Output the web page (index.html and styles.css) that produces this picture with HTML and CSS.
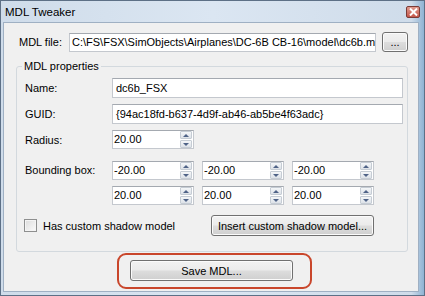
FILE: index.html
```html
<!DOCTYPE html>
<html lang="en">
<head>
    <meta charset="UTF-8">
    <title>MDL Tweaker</title>
    <link rel="stylesheet" href="styles.css">
</head>
<body>
    <div class="window">
        <!-- Title bar -->
        <div class="titlebar">
            <span class="title">MDL Tweaker</span>
            <span class="close">
                <svg width="9" height="8" viewBox="0 0 9 8">
                    <path d="M1 0.5 L8 7.5 M8 0.5 L1 7.5" stroke="#fff" stroke-width="2"/>
                </svg>
            </span>
        </div>

        <div class="client">
            <!-- File chooser -->
            <div class="file-row">
                <span class="file-label">MDL file:</span>
                <div class="text file-input">C:\FS\FSX\SimObjects\Airplanes\DC-6B CB-16\model\dc6b.mdl</div>
                <button class="btn browse">...</button>
            </div>

            <!-- Properties group -->
            <fieldset class="group">
                <legend>MDL properties</legend>

                <div class="row">
                    <span class="row-label">Name:</span>
                    <div class="text wide">dc6b_FSX</div>
                </div>
                <div class="row">
                    <span class="row-label">GUID:</span>
                    <div class="text wide">{94ac18fd-b637-4d9f-ab46-ab5be4f63adc}</div>
                </div>
                <div class="row spin-row">
                    <span class="row-label">Radius:</span>
                    <div class="spin">
                        <span class="spin-val">20.00</span>
                        <span class="spin-btns"><span class="up"></span><span class="down"></span></span>
                    </div>
                </div>

                <div class="bbox">
                    <span class="row-label bbox-label">Bounding box:</span>
                    <div class="spins">
                        <div class="spin"><span class="spin-val">-20.00</span><span class="spin-btns"><span class="up"></span><span class="down"></span></span></div>
                        <div class="spin"><span class="spin-val">-20.00</span><span class="spin-btns"><span class="up"></span><span class="down"></span></span></div>
                        <div class="spin"><span class="spin-val">-20.00</span><span class="spin-btns"><span class="up"></span><span class="down"></span></span></div>
                        <div class="spin"><span class="spin-val">20.00</span><span class="spin-btns"><span class="up"></span><span class="down"></span></span></div>
                        <div class="spin"><span class="spin-val">20.00</span><span class="spin-btns"><span class="up"></span><span class="down"></span></span></div>
                        <div class="spin"><span class="spin-val">20.00</span><span class="spin-btns"><span class="up"></span><span class="down"></span></span></div>
                    </div>
                </div>

                <div class="shadow-row">
                    <label class="check">
                        <span class="checkbox"></span>
                        Has custom shadow model
                    </label>
                    <button class="btn insert">Insert custom shadow model...</button>
                </div>
            </fieldset>

            <!-- Save button, circled in red -->
            <div class="save-row">
                <div class="annot">
                    <button class="btn save">Save MDL...</button>
                </div>
            </div>
        </div>
    </div>
</body>
</html>
```

FILE: styles.css
```css
/* Reset */
* {
    margin: 0;
    padding: 0;
    box-sizing: border-box;
    font-family: "Liberation Sans", Arial, sans-serif;
}

body {
    width: 425px;
    height: 296px;
    overflow: hidden;
    background-color: #fff;
    color: #000;
    font-size: 11px;
}

/* Window frame */
.window {
    width: 425px;
    height: 296px;
    display: flex;
    flex-direction: column;
    background: linear-gradient(90deg, #cfdcea 0%, #dbe6f2 50%, #cfdcea 97%, #8fb3d3 100%);
    border: 1px solid #5d7086;
    padding: 0 5px 3px 2px;
}

.titlebar {
    height: 21px;
    display: flex;
    align-items: center;
    justify-content: space-between;
    padding: 0 0 0 2px;
}

.title {
    font-size: 11.5px;
    color: #000;
}

.close {
    width: 14px;
    height: 12px;
    margin-right: -1px;
    margin-top: 1px;
    display: flex;
    align-items: center;
    justify-content: center;
    background: linear-gradient(#e09a8e, #c4564a);
    border: 1px solid #7a3b36;
    border-radius: 2px;
}

.client {
    flex: 1;
    background-color: #f0f0f0;
    border: 1px solid #9fb0c3;
}

/* Buttons */
.btn {
    font-size: 11px;
    color: #000;
    border: 1px solid #707070;
    border-radius: 3px;
    background: linear-gradient(#f2f2f2 0%, #ebebeb 48%, #dddddd 52%, #cfcfcf 100%);
    box-shadow: inset 0 0 0 1px #fbfbfb;
}

/* Text boxes */
.text {
    height: 20px;
    background-color: #fff;
    border: 1px solid #c4c8ce;
    border-top-color: #a4a9b0;
    padding: 0 3px;
    line-height: 18px;
    white-space: nowrap;
    overflow: hidden;
}

/* File row */
.file-row {
    display: flex;
    align-items: center;
    padding-top: 9px;
}

.file-label {
    margin-left: 15px;
    width: 50px;
}

.file-input {
    width: 307px;
    height: 19px;
    line-height: 17px;
    padding-left: 2px;
}

.browse {
    width: 26px;
    height: 20px;
    margin-left: 6px;
    line-height: 10px;
}

/* Group box */
.group {
    margin: 8px 10px 0 12px;
    border: 1px solid #d3d9de;
    border-radius: 3px;
    padding: 5px 4px 15px 8px;
    min-width: 0;
}

.group legend {
    margin-left: -3px;
    padding: 0 2px;
    line-height: 13px;
}

.row {
    display: flex;
    align-items: center;
    height: 20px;
    margin-bottom: 6px;
}

.row-label {
    width: 87px;
}

.wide {
    width: 291px;
}

.spin-row {
    height: 19px;
    margin-bottom: 12px;
}

/* Spin boxes */
.spin {
    width: 82px;
    height: 19px;
    display: flex;
    background-color: #fff;
    border: 1px solid #c4c8ce;
    border-top-color: #a4a9b0;
}

.spin-val {
    flex: 1;
    padding-left: 1px;
    line-height: 17px;
}

.spin-btns {
    width: 13px;
    display: flex;
    flex-direction: column;
    gap: 1px;
    padding: 0 1px 0 0;
}

.spin-btns span {
    flex: 1;
    display: flex;
    align-items: center;
    justify-content: center;
    background: linear-gradient(#f4f6f8, #dde2e8);
    border: 1px solid #c5ccd4;
    border-radius: 1px;
}

.spin-btns .up::after {
    content: "";
    border-left: 3px solid transparent;
    border-right: 3px solid transparent;
    border-bottom: 3px solid #4f6387;
}

.spin-btns .down::after {
    content: "";
    border-left: 3px solid transparent;
    border-right: 3px solid transparent;
    border-top: 3px solid #4f6387;
}

.bbox {
    display: flex;
    align-items: flex-start;
}

.bbox-label {
    line-height: 19px;
}

.spins {
    display: grid;
    grid-template-columns: 82px 82px 82px;
    column-gap: 8px;
    row-gap: 6px;
}

/* Shadow row */
.shadow-row {
    display: flex;
    align-items: center;
    margin-top: 10px;
}

.check {
    width: 186px;
    display: flex;
    align-items: center;
    gap: 6px;
    margin-left: -1px;
}

.checkbox {
    width: 13px;
    height: 13px;
    border: 1px solid #8e8f8f;
    background: linear-gradient(135deg, #dcdcdc, #fbfbfb);
    box-shadow: inset 0 0 0 1px #f4f4f4;
}

.insert {
    width: 163px;
    height: 21px;
    margin-left: 1px;
}

/* Save row with red annotation */
.save-row {
    padding: 1px 0 0 113px;
}

.annot {
    width: fit-content;
    border: 2px solid #c9462b;
    border-radius: 9px;
    padding: 5px 17px 6px 11px;
}

.save {
    width: 163px;
    height: 21px;
    display: block;
}
```
